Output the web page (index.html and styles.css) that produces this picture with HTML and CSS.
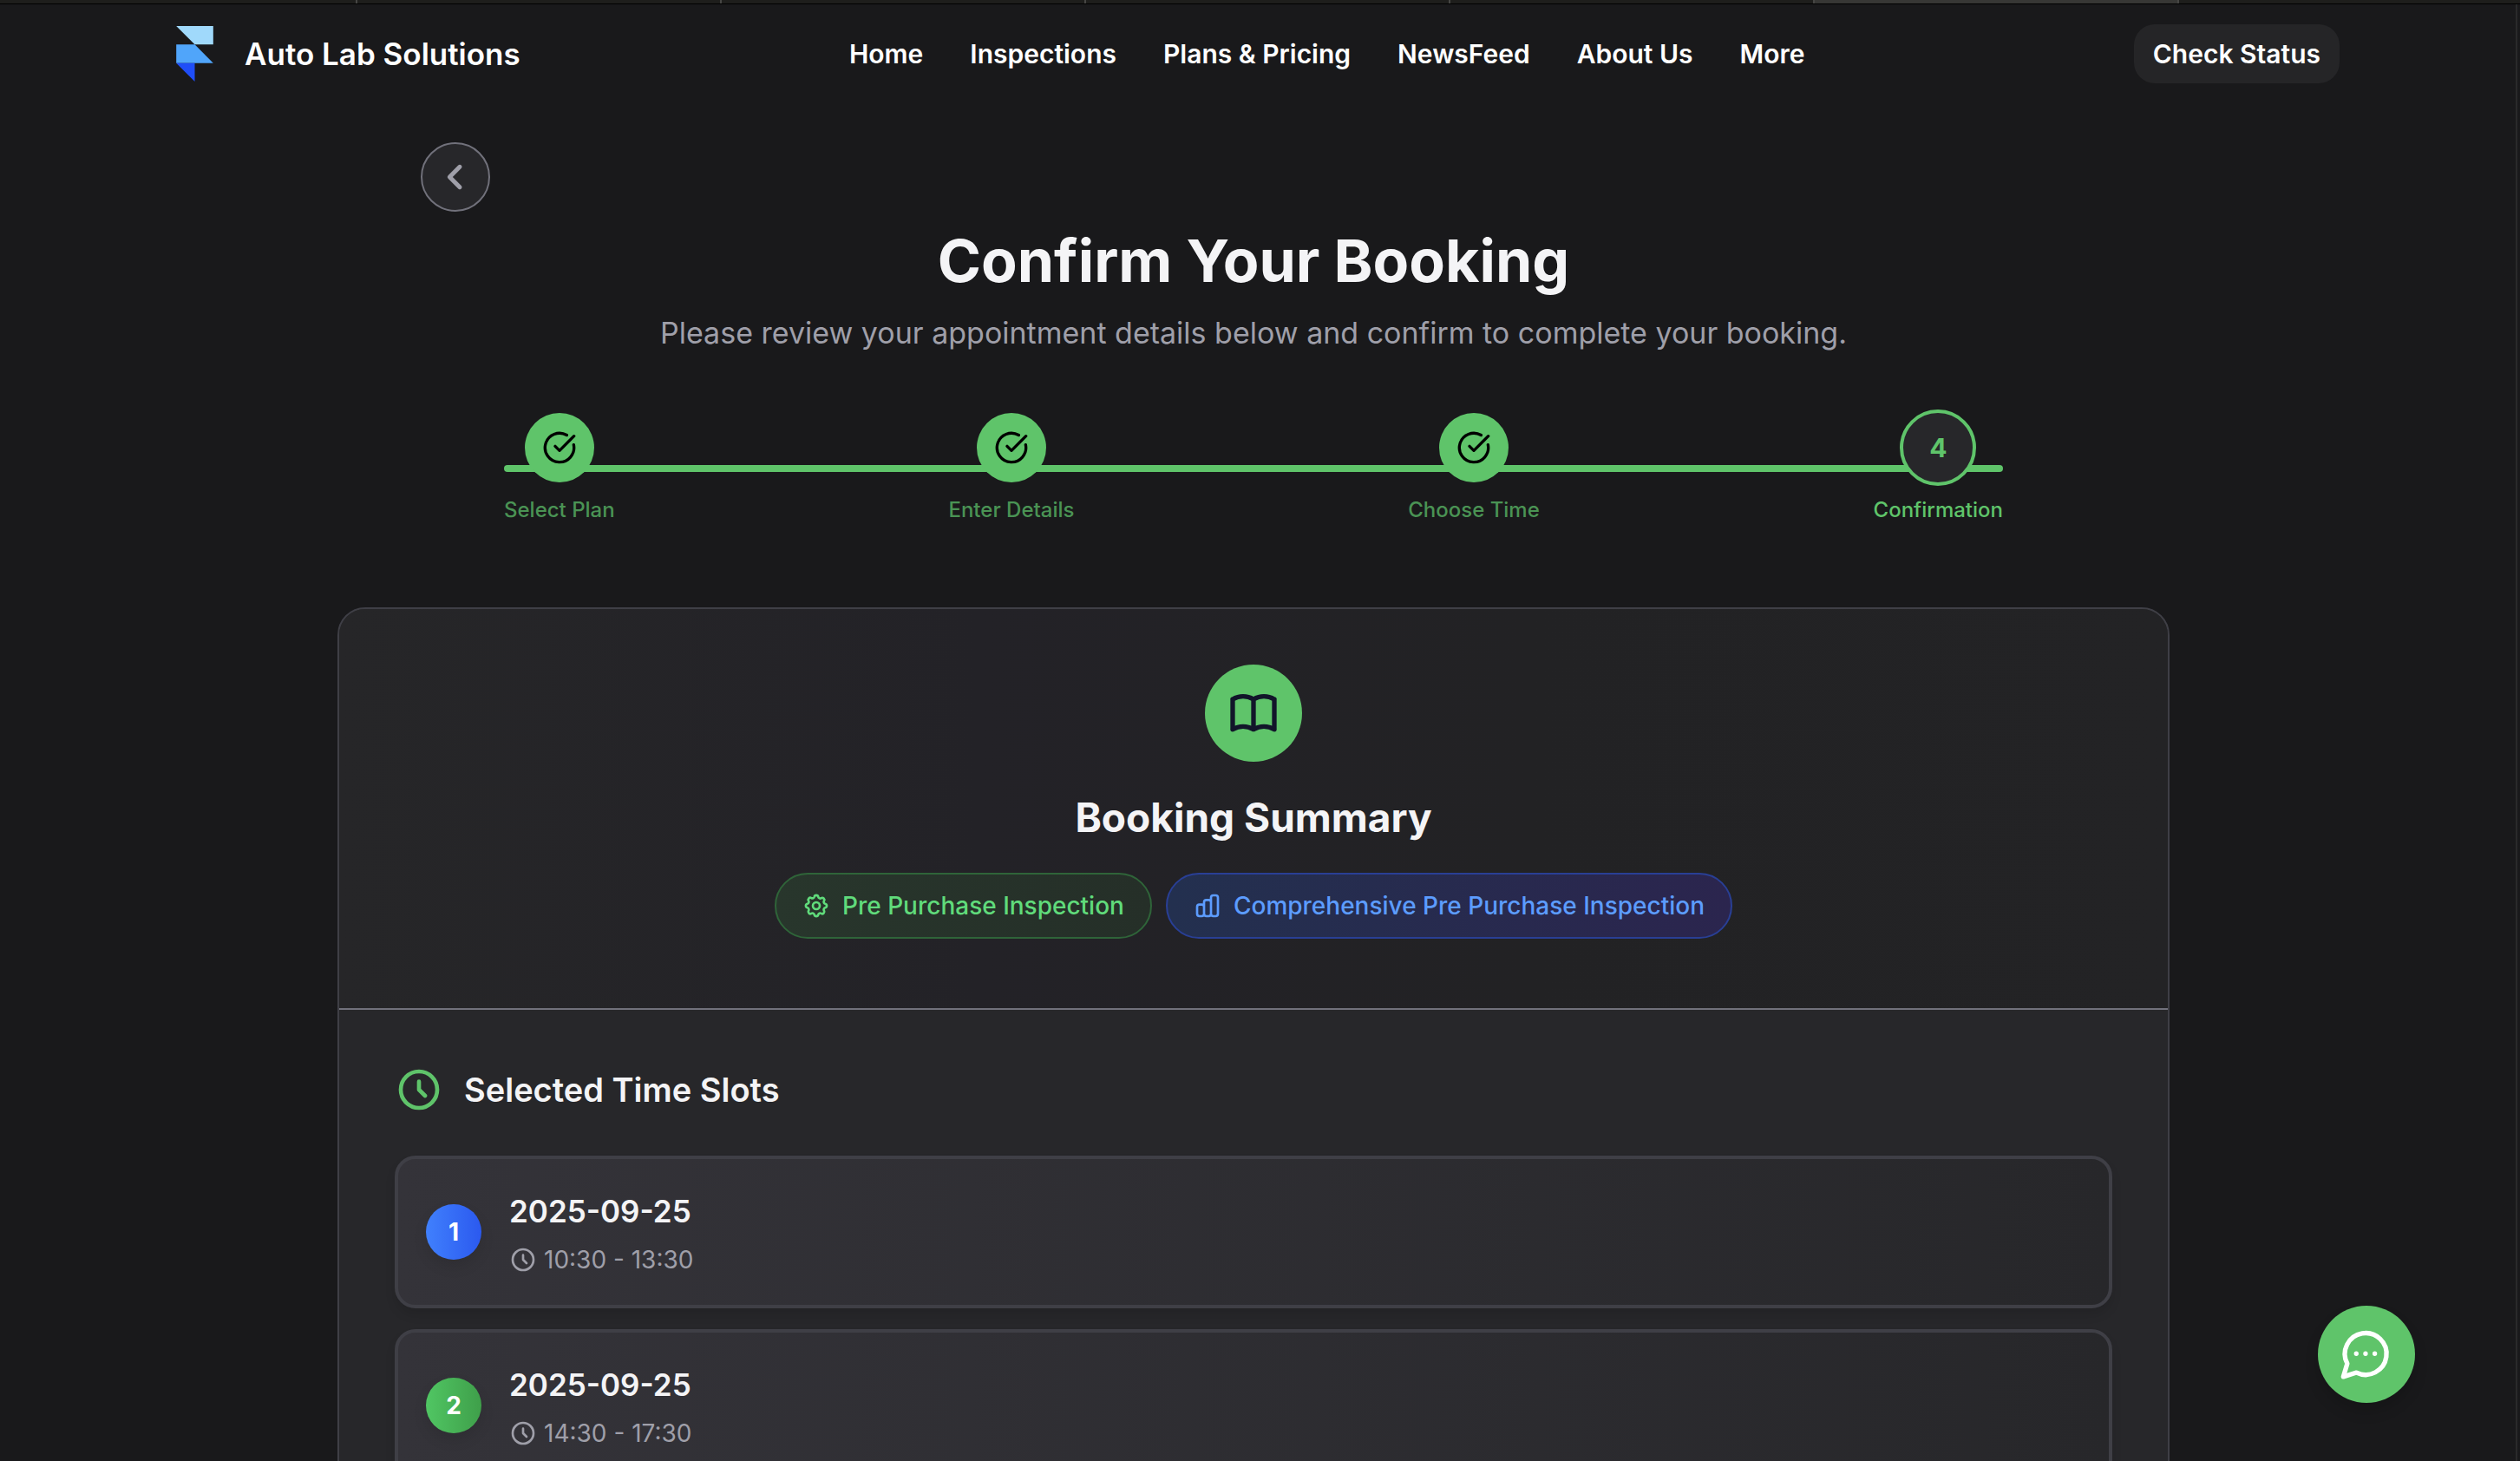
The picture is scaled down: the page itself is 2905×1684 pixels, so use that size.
FILE: index.html
```html
<!DOCTYPE html>
<html lang="en">
<head>
<meta charset="utf-8">
<meta name="viewport" content="width=device-width, initial-scale=1">
<title>Confirm Your Booking | Auto Lab Solutions</title>
<link rel="stylesheet" href="styles.css">
</head>
<body>
<div class="window">
  <div class="tabs" aria-hidden="true">
    <span class="tab"></span><span class="tab"></span><span class="tab"></span><span class="tab"></span><span class="tab"></span><span class="tab tab-active"></span><span class="tab tab-rest"></span>
  </div>
  <div class="page">
    <header class="site-header">
      <a class="brand" href="#">
        <svg class="brand-logo" viewBox="0 0 42 63" aria-hidden="true">
          <path fill="#a0d9fb" d="M0 0h42v21H21z"/>
          <path fill="#50a5fa" d="M0 21h21l21 21H0z"/>
          <path fill="#1f4ef8" d="M0 42h21v21z"/>
        </svg>
        <span>Auto Lab Solutions</span>
      </a>
      <nav class="nav">
        <a href="#">Home</a>
        <a href="#">Inspections</a>
        <a href="#">Plans &amp; Pricing</a>
        <a href="#">NewsFeed</a>
        <a href="#">About Us</a>
        <a href="#">More</a>
      </nav>
      <button class="status-button" type="button">Check Status</button>
    </header>

    <main class="main">
      <div class="back-row">
        <button class="back-button" type="button" aria-label="Back">
          <svg viewBox="0 0 24 24" aria-hidden="true"><path d="M15 19l-7-7 7-7"/></svg>
        </button>
      </div>
      <h1 class="title">Confirm Your Booking</h1>
      <p class="subtitle">Please review your appointment details below and confirm to complete your booking.</p>

      <ol class="steps">
        <li class="step">
          <span class="step-slot"><span class="step-dot"><svg viewBox="0 0 24 24" aria-hidden="true"><path d="M21.8 10A10 10 0 1 1 17 3.34M9 11l3 3L22 4"/></svg></span></span>
          <span class="step-label">Select Plan</span>
        </li>
        <li class="step">
          <span class="step-slot"><span class="step-dot"><svg viewBox="0 0 24 24" aria-hidden="true"><path d="M21.8 10A10 10 0 1 1 17 3.34M9 11l3 3L22 4"/></svg></span></span>
          <span class="step-label">Enter Details</span>
        </li>
        <li class="step">
          <span class="step-slot"><span class="step-dot"><svg viewBox="0 0 24 24" aria-hidden="true"><path d="M21.8 10A10 10 0 1 1 17 3.34M9 11l3 3L22 4"/></svg></span></span>
          <span class="step-label">Choose Time</span>
        </li>
        <li class="step step-current" aria-current="step">
          <span class="step-slot"><span class="step-dot">4</span></span>
          <span class="step-label">Confirmation</span>
        </li>
      </ol>

      <section class="card">
        <div class="summary">
          <div class="summary-icon">
            <svg viewBox="0 0 24 24" aria-hidden="true"><path d="M3 19a9 9 0 0 1 9 0a9 9 0 0 1 9 0M3 6a9 9 0 0 1 9 0a9 9 0 0 1 9 0M3 6v13M12 6v13M21 6v13"/></svg>
          </div>
          <h2 class="summary-title">Booking Summary</h2>
          <div class="pills">
            <span class="pill pill-green">
              <svg viewBox="0 0 24 24" aria-hidden="true"><path d="M10.3 4.3c.4-1.8 3-1.8 3.4 0a1.7 1.7 0 0 0 2.6 1.1c1.5-.9 3.3.8 2.4 2.4a1.7 1.7 0 0 0 1 2.5c1.8.4 1.8 3 0 3.4a1.7 1.7 0 0 0-1 2.6c.9 1.5-.9 3.3-2.4 2.4a1.7 1.7 0 0 0-2.6 1c-.4 1.8-3 1.8-3.4 0a1.7 1.7 0 0 0-2.6-1c-1.5.9-3.3-.9-2.4-2.4a1.7 1.7 0 0 0-1-2.6c-1.8-.4-1.8-3 0-3.4a1.7 1.7 0 0 0 1-2.6c-.9-1.5.9-3.3 2.4-2.4 1 .6 2.3.1 2.6-1z"/><circle cx="12" cy="12" r="3"/></svg>
              Pre Purchase Inspection
            </span>
            <span class="pill pill-blue">
              <svg viewBox="0 0 24 24" aria-hidden="true"><path d="M9 19v-6a2 2 0 0 0-2-2H5a2 2 0 0 0-2 2v6a2 2 0 0 0 2 2h2a2 2 0 0 0 2-2zm0 0V9a2 2 0 0 1 2-2h2a2 2 0 0 1 2 2v10m-6 0a2 2 0 0 0 2 2h2a2 2 0 0 0 2-2m0 0V5a2 2 0 0 1 2-2h2a2 2 0 0 1 2 2v14a2 2 0 0 1-2 2h-2a2 2 0 0 1-2-2z"/></svg>
              Comprehensive Pre Purchase Inspection
            </span>
          </div>
        </div>
        <div class="slots">
          <h3 class="slots-title">
            <svg viewBox="0 0 24 24" aria-hidden="true"><path d="M12 8v4l3 3m6-3a9 9 0 1 1-18 0 9 9 0 0 1 18 0z"/></svg>
            Selected Time Slots
          </h3>
          <ul class="slot-list">
            <li class="slot">
              <span class="slot-number">1</span>
              <div>
                <p class="slot-date">2025-09-25</p>
                <p class="slot-time"><svg viewBox="0 0 24 24" aria-hidden="true"><path d="M12 8v4l3 3m6-3a9 9 0 1 1-18 0 9 9 0 0 1 18 0z"/></svg>10:30 - 13:30</p>
              </div>
            </li>
            <li class="slot">
              <span class="slot-number slot-number-green">2</span>
              <div>
                <p class="slot-date">2025-09-25</p>
                <p class="slot-time"><svg viewBox="0 0 24 24" aria-hidden="true"><path d="M12 8v4l3 3m6-3a9 9 0 1 1-18 0 9 9 0 0 1 18 0z"/></svg>14:30 - 17:30</p>
              </div>
            </li>
          </ul>
        </div>
      </section>
    </main>
  </div>
  <button class="chat-button" type="button" aria-label="Open chat">
    <svg viewBox="0 0 24 24" aria-hidden="true"><path d="M2 21.7L3.7 16A9 9 0 1 1 7.7 19.9ZM7.6 11.7v.01M11.6 11.7v.01M15.6 11.7v.01"/></svg>
  </button>
</div>
</body>
</html>
```
FILE: styles.css
```css
* {
  box-sizing: border-box;
}

body {
  margin: 0;
  background: #19191b;
  color: #f4f4f5;
  font-family: Inter, "Liberation Sans", sans-serif;
}

h1, h2, h3, p, ol, ul {
  margin: 0;
  padding: 0;
  list-style: none;
}

button {
  font: inherit;
  border: 0;
  padding: 0;
  cursor: pointer;
}

a {
  color: inherit;
  text-decoration: none;
}

svg {
  display: block;
  flex: none;
  fill: none;
  stroke: currentColor;
  stroke-width: 2;
  stroke-linecap: round;
  stroke-linejoin: round;
}

.window {
  display: flex;
  flex-direction: column;
  height: 100vh;
  overflow: hidden;
}

/* Strip of browser tabs */
.tabs {
  display: flex;
  flex: none;
  height: 5px;
  background: #1e1e1c;
  border-bottom: 1px solid #000;
}

.tab {
  width: 420px;
  border-right: 2px solid #464644;
}

.tab:first-child {
  width: 412px;
}

.tab-active {
  background: #373735;
}

.tab-rest {
  flex: 1;
  border: 0;
}

.page {
  flex: 1;
  min-height: 0;
  overflow: hidden;
  margin-right: 3px;
  border-right: 2px solid #2a2a2b;
}

/* Header */
.site-header {
  display: flex;
  justify-content: space-between;
  align-items: center;
  width: 86%;
  margin: 0 auto;
  padding-top: 23px;
}

.brand {
  display: flex;
  align-items: center;
  gap: 36px;
  font-size: 35px;
  line-height: 48px;
  font-weight: 600;
  color: #fff;
}

.brand-logo {
  width: 43px;
  height: 64px;
  stroke: none;
}

.nav {
  display: flex;
  gap: 54px;
  font-size: 30px;
  line-height: 40px;
  font-weight: 600;
  color: #fff;
}

.status-button {
  padding: 14px 22px;
  border-radius: 24px;
  background: #252527;
  color: #fff;
  font-size: 30px;
  line-height: 40px;
  font-weight: 600;
}

/* Booking content */
.main {
  display: flex;
  flex-direction: column;
  align-items: center;
  padding: 68px 10px 0 0;
}

.back-row {
  width: 100%;
  max-width: 1920px;
}

.back-button {
  display: flex;
  align-items: center;
  justify-content: center;
  width: 80px;
  height: 80px;
  border: 2px solid #71717b;
  border-radius: 50%;
  background: #27272a;
  color: #9f9fa9;
}

.back-button svg {
  width: 40px;
  height: 40px;
  stroke-width: 3;
}

.title {
  margin-top: 16px;
  font-size: 68px;
  line-height: 80px;
  font-weight: 700;
  color: #f4f4f6;
}

.subtitle {
  margin-top: 16px;
  font-size: 34px;
  line-height: 56px;
  color: #9f9fa9;
}

/* Progress steps */
.steps {
  position: relative;
  display: flex;
  justify-content: space-between;
  width: 100%;
  max-width: 1728px;
  margin-top: 60px;
}

.steps::before {
  content: "";
  position: absolute;
  top: 64px;
  left: 0;
  right: 0;
  height: 8px;
  border-radius: 4px;
  background: #5fc46a;
}

.step {
  position: relative;
  display: flex;
  flex-direction: column;
  align-items: center;
  gap: 12px;
}

.step-slot {
  display: flex;
  align-items: center;
  height: 88px;
}

.step-dot {
  display: flex;
  align-items: center;
  justify-content: center;
  width: 80px;
  height: 80px;
  border-radius: 50%;
  background: #5fc46a;
  color: #000;
  font-size: 30px;
  line-height: 40px;
  font-weight: 700;
}

.step-dot svg {
  width: 40px;
  height: 40px;
}

.step-label {
  font-size: 24px;
  line-height: 32px;
  font-weight: 500;
  color: #4a9354;
}

.step-current .step-dot {
  width: 88px;
  height: 88px;
  border: 4px solid #5fc46a;
  background: #27272a;
  color: #5fc46a;
}

.step-current .step-label {
  color: #5fc46a;
}

/* Summary card */
.card {
  width: 100%;
  max-width: 2112px;
  margin-top: 96px;
  border: 2px solid #3f3f46;
  border-radius: 32px;
  background: #27272a;
  overflow: hidden;
}

.summary {
  display: flex;
  flex-direction: column;
  align-items: center;
  padding: 64px 64px 80px;
  border-bottom: 2px solid #71717b;
  background: linear-gradient(90deg, #262628, #232227 35%, #222224 65%, #232325);
}

.summary-icon {
  display: flex;
  align-items: center;
  justify-content: center;
  width: 112px;
  height: 112px;
  border-radius: 50%;
  background: #5fc46a;
  color: #12152a;
}

.summary-icon svg {
  width: 64px;
  height: 64px;
}

.summary-title {
  margin-top: 32px;
  font-size: 46px;
  line-height: 64px;
  font-weight: 700;
  color: #f4f4f6;
}

.pills {
  display: flex;
  gap: 16px;
  margin-top: 32px;
}

.pill {
  display: flex;
  align-items: center;
  gap: 14px;
  padding: 16px 30px;
  border: 2px solid;
  border-radius: 38px;
  font-size: 28px;
  line-height: 40px;
  font-weight: 500;
}

.pill svg {
  width: 32px;
  height: 32px;
}

.pill-green {
  background: linear-gradient(90deg, #28362c, #252f28);
  border-color: #2f6439;
  color: #60db7b;
}

.pill-blue {
  background: linear-gradient(90deg, #23304f, #2b254e);
  border-color: #293f95;
  color: #5c9cff;
}

/* Time slots */
.slots {
  padding: 64px;
}

.slots-title {
  display: flex;
  align-items: center;
  gap: 24px;
  font-size: 38px;
  line-height: 56px;
  font-weight: 600;
  color: #f4f4f6;
}

.slots-title svg {
  width: 56px;
  height: 56px;
  color: #5fc46a;
}

.slot-list {
  display: flex;
  flex-direction: column;
  gap: 24px;
  margin-top: 48px;
}

.slot {
  display: flex;
  align-items: center;
  gap: 32px;
  padding: 32px;
  border: 4px solid #3f3f46;
  border-radius: 24px;
  background: linear-gradient(90deg, #343339, #27272a);
  box-shadow: 0 8px 12px rgba(0, 0, 0, 0.1);
}

.slot-number {
  display: flex;
  align-items: center;
  justify-content: center;
  width: 64px;
  height: 64px;
  border-radius: 50%;
  background: linear-gradient(90deg, #4080fd, #2b59ef);
  box-shadow: 0 8px 16px rgba(0, 0, 0, 0.1);
  color: #fff;
  font-size: 28px;
  line-height: 40px;
  font-weight: 700;
}

.slot-number-green {
  background: linear-gradient(90deg, #50c663, #3f9f4a);
}

.slot-date {
  font-size: 35px;
  line-height: 56px;
  font-weight: 600;
  color: #f4f4f6;
}

.slot-time {
  display: flex;
  align-items: center;
  gap: 8px;
  margin-top: 8px;
  font-size: 28px;
  line-height: 40px;
  color: #9f9fa9;
}

.slot-time svg {
  width: 32px;
  height: 32px;
}

.chat-button {
  position: fixed;
  right: 121px;
  bottom: 67px;
  display: flex;
  align-items: center;
  justify-content: center;
  width: 112px;
  height: 112px;
  border-radius: 50%;
  background: #5fc46a;
  box-shadow: 0 10px 16px rgba(0, 0, 0, 0.15);
  color: #fff;
}

.chat-button svg {
  width: 64px;
  height: 64px;
}
```
